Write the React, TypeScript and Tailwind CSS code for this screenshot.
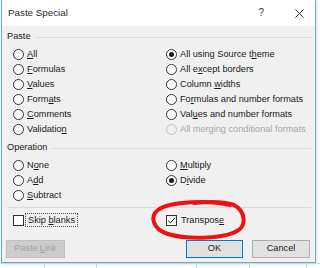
import type { ReactNode } from 'react'

type Item = { text: string; u?: number; checked?: boolean; disabled?: boolean }

const pasteLeft: Item[] = [
  { text: 'All', u: 0 },
  { text: 'Formulas', u: 0 },
  { text: 'Values', u: 0 },
  { text: 'Formats', u: 4 },
  { text: 'Comments', u: 0 },
  { text: 'Validation', u: 9 },
]

const pasteRight: Item[] = [
  { text: 'All using Source theme', u: 18, checked: true },
  { text: 'All except borders', u: 5 },
  { text: 'Column widths', u: 7 },
  { text: 'Formulas and number formats', u: 2 },
  { text: 'Values and number formats', u: 3 },
  { text: 'All merging conditional formats', disabled: true },
]

const opLeft: Item[] = [
  { text: 'None', u: 1 },
  { text: 'Add', u: 1 },
  { text: 'Subtract', u: 0 },
]

const opRight: Item[] = [
  { text: 'Multiply', u: 0 },
  { text: 'Divide', u: 1, checked: true },
]

function Label({ text, u }: { text: string; u?: number }) {
  if (u === undefined) return <>{text}</>
  return (
    <>
      {text.slice(0, u)}
      <span className="underline underline-offset-[1px]">{text[u]}</span>
      {text.slice(u + 1)}
    </>
  )
}

function Radio({ item }: { item: Item }) {
  return (
    <div className="flex h-[15px] items-center">
      <span
        className={
          item.disabled
            ? 'flex h-[11px] w-[11px] items-center justify-center rounded-full border border-[#c4c4c4] bg-[#f0f0f0]'
            : 'flex h-[11px] w-[11px] items-center justify-center rounded-full border border-[#333333] bg-white'
        }
      >
        {item.checked ? <span className="h-[5px] w-[5px] rounded-full bg-[#1a1a1a]" /> : null}
      </span>
      <span className={item.disabled ? 'ml-[3px] text-[#a6a6a6]' : 'ml-[3px] text-[#1a1a1a]'}>
        <Label text={item.text} u={item.u} />
      </span>
    </div>
  )
}

function GroupHeader({ children }: { children: ReactNode }) {
  return (
    <div className="flex h-[14px] items-center pl-[5px] pr-[4px] text-[#1a1a1a]">
      <span>{children}</span>
      <span className="ml-[4px] h-px flex-1 bg-[#dcdcdc]" />
    </div>
  )
}

function Check({ item, focused }: { item: Item; focused?: boolean }) {
  return (
    <div className="flex h-[16px] items-center">
      <span className="flex h-[11px] w-[11px] items-center justify-center border border-[#333333] bg-white">
        {item.checked ? (
          <svg viewBox="0 0 9 9" className="h-[9px] w-[9px]">
            <path d="M1.2 4.6 L3.5 6.9 L7.9 1.8" fill="none" stroke="#1a1a1a" strokeWidth="1" />
          </svg>
        ) : null}
      </span>
      <span
        className={
          focused
            ? 'ml-[1px] block border border-dotted border-[#555555] px-[2px] leading-[12px] text-[#1a1a1a]'
            : 'ml-[1px] block border border-transparent px-[2px] leading-[12px] text-[#1a1a1a]'
        }
      >
        <Label text={item.text} u={item.u} />
      </span>
    </div>
  )
}

export default function App() {
  return (
    <div className="relative flex h-[268px] w-[320px] flex-col overflow-hidden bg-white font-['Liberation_Sans',sans-serif] text-[9.2px] leading-none">
      <div className="ml-[1px] flex h-[263px] w-[315px] flex-col border border-t-0 border-[#62b0c4] bg-[#f0f0f0] shadow-[1px_1px_3px_rgba(0,0,0,0.15)]">
        {/* title bar */}
        <div className="flex h-[26px] items-center bg-white pl-[6px] text-[9.8px] text-[#2a2a2a]">
          <span>Paste Special</span>
          <span className="ml-auto mr-[31px] text-[10px] text-[#333333]">?</span>
          <svg viewBox="0 0 9 9" className="mr-[11px] h-[9px] w-[9px]">
            <path d="M0.5 0.5 L8.5 8.5 M8.5 0.5 L0.5 8.5" stroke="#333333" strokeWidth="1" />
          </svg>
        </div>

        <div className="flex flex-1 flex-col pt-[4px]">
          <GroupHeader>Paste</GroupHeader>
          <div className="mt-[3px] flex pl-[11px]">
            <div className="w-[153px]">
              {pasteLeft.map((item) => (
                <Radio key={item.text} item={item} />
              ))}
            </div>
            <div className="flex-1">
              {pasteRight.map((item) => (
                <Radio key={item.text} item={item} />
              ))}
            </div>
          </div>

          <div className="mt-[4px]">
            <GroupHeader>Operation</GroupHeader>
          </div>
          <div className="mt-[3px] flex pl-[11px]">
            <div className="w-[153px]">
              {opLeft.map((item) => (
                <Radio key={item.text} item={item} />
              ))}
            </div>
            <div className="flex-1">
              {opRight.map((item) => (
                <Radio key={item.text} item={item} />
              ))}
            </div>
          </div>

          <div className="mt-[4px] pl-[5px] pr-[4px]">
            <div className="h-px bg-[#dcdcdc]" />
          </div>

          <div className="mt-[4px] flex pl-[11px]">
            <div className="w-[153px]">
              <Check item={{ text: 'Skip blanks', u: 5 }} focused />
            </div>
            <div className="flex-1">
              <Check item={{ text: 'Transpose', u: 8, checked: true }} />
            </div>
          </div>

          <div className="mt-[12px] flex pl-[4px] pr-[5px]">
            <div className="flex h-[18px] w-[59px] items-center justify-center border border-[#bfbfbf] bg-[#cccccc] text-[#a3a3a3]">
              Paste <span className="ml-[2px] underline">L</span>ink
            </div>
            <div className="ml-auto flex h-[18px] w-[57px] items-center justify-center border border-[#0078d7] bg-[#e1e1e1] text-[#1a1a1a]">
              OK
            </div>
            <div className="ml-[9px] flex h-[18px] w-[58px] items-center justify-center border border-[#adadad] bg-[#e1e1e1] text-[#1a1a1a]">
              Cancel
            </div>
          </div>
        </div>
      </div>

      {/* sheet cells peeking out below the dialog */}
      <div className="flex flex-1 border-t border-[#d4d4d4]">
        <div className="w-[45px] border-r border-[#d4d4d4]" />
        <div className="w-[52px] border-r border-[#d4d4d4]" />
        <div className="w-[100px] border-r border-[#d4d4d4]" />
        <div className="w-[53px] border-r border-[#d4d4d4]" />
        <div className="w-[57px] border-r border-[#d4d4d4]" />
      </div>

      {/* red hand-drawn mark around Transpose */}
      <svg className="pointer-events-none absolute left-[148px] top-[198px] h-[44px] w-[100px]" viewBox="0 0 100 44">
        <path
          d="M82 7 C62 2 22 3 10 12 C2 18 4 31 20 36 C40 42 80 41 92 31 C98 25 97 13 86 7 C74 3 56 4 46 5"
          fill="none"
          stroke="#ee1111"
          strokeWidth="4"
          strokeLinecap="round"
        />
      </svg>
    </div>
  )
}
